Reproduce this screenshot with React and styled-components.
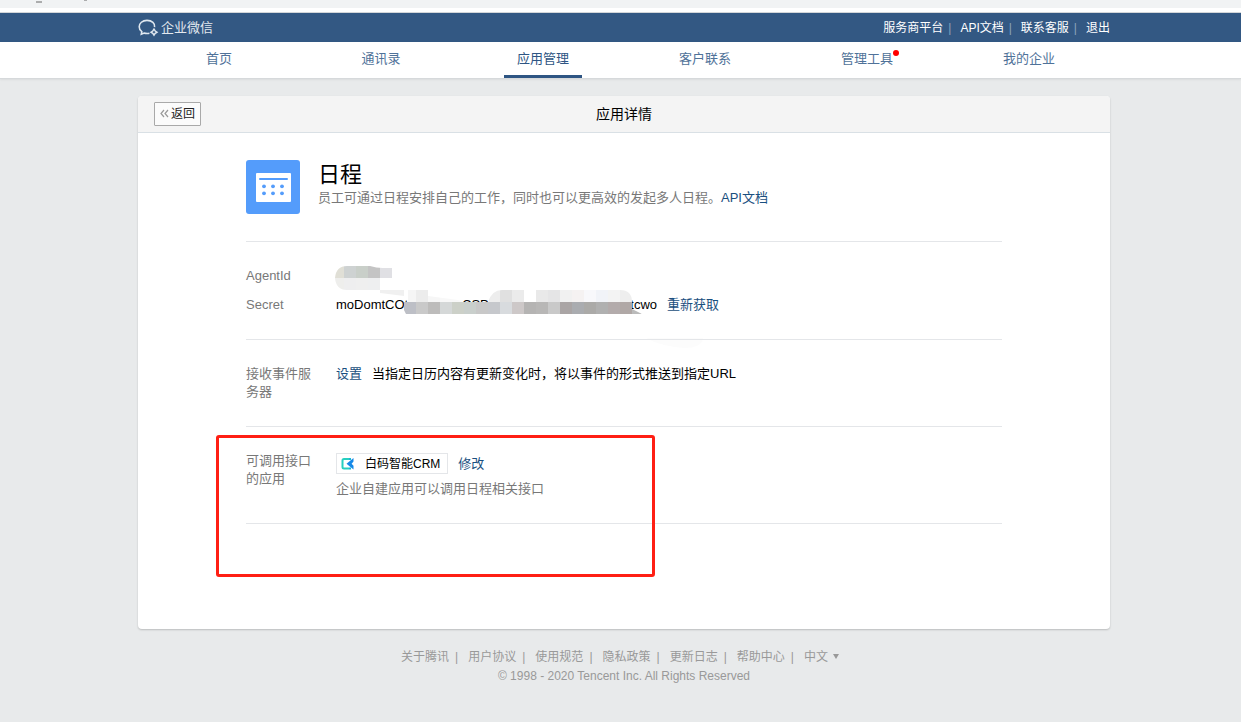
import React from 'react';
import styled, { createGlobalStyle } from 'styled-components';

const GlobalStyle = createGlobalStyle`
  * {
    box-sizing: border-box;
  }

  body {
    margin: 0;
    background: #e8eaeb;
    color: #000;
    font-family: "Liberation Sans", "Noto Sans CJK SC", sans-serif;
    font-size: 13px;
    line-height: 18px;
  }

  a {
    color: inherit;
    text-decoration: none;
  }
`;

const BrowserEdge = styled.div`
  height: 13px;
  background: #fff;
  border-top: 8px solid #f1f3f4;
  border-bottom: 1px solid #d3d6d9;
  position: relative;

  svg {
    display: block;
    position: absolute;
    top: -8px;
    left: 36px;
  }
`;

const Container = styled.div`
  max-width: 979px;
  margin: 0 auto;
  padding-left: 7px;
`;

const TopBar = styled.header`
  background: #335883;
  color: #fff;
`;

const TopBarInner = styled.div`
  display: flex;
  align-items: center;
  justify-content: space-between;
  height: 29px;
`;

const Logo = styled.a`
  display: flex;
  align-items: center;
  gap: 2px;
  color: #e3e9f0;
`;

const TopLinks = styled.div`
  display: flex;
  align-items: center;
  font-size: 12px;
`;

const TopDivider = styled.span`
  color: #8ea3bb;
  margin: 0 9px 0 5px;
`;

const NavBar = styled.nav`
  background: #fff;
  border-bottom: 1px solid #d6d9db;
  box-shadow: 0 1px 2px rgba(0, 0, 0, 0.06);
`;

const NavList = styled.div`
  display: grid;
  grid-template-columns: repeat(6, 1fr);
  justify-items: center;
`;

const NavItem = styled.a`
  position: relative;
  width: 78px;
  height: 36px;
  padding-top: 8px;
  text-align: center;
  color: ${(props) => (props.$active ? '#2e5583' : '#4f7299')};
  border-bottom: 3px solid ${(props) => (props.$active ? '#2e5583' : 'transparent')};
`;

const RedDot = styled.span`
  position: absolute;
  top: 8px;
  right: 7px;
  width: 6px;
  height: 6px;
  border-radius: 50%;
  background: #f00;
`;

const Card = styled.main`
  margin-top: 17px;
  padding-bottom: 105px;
  background: #fff;
  border-radius: 4px;
  box-shadow: 0 1px 2px rgba(0, 0, 0, 0.2);
`;

const CardHeader = styled.div`
  display: grid;
  grid-template-columns: 1fr auto 1fr;
  align-items: center;
  height: 37px;
  padding: 0 16px;
  background: #f4f4f4;
  border-bottom: 1px solid #d9e0e5;
  border-radius: 4px 4px 0 0;
`;

const BackButton = styled.button`
  display: flex;
  align-items: center;
  justify-self: start;
  gap: 2px;
  height: 24px;
  padding: 0 5px 3px;
  background: #fbfbfb;
  border: 1px solid #a9a9a9;
  border-radius: 1px;
  color: #222;
  font-family: inherit;
  font-size: 12px;
`;

const CardTitle = styled.h2`
  margin: 0;
  font-size: 14px;
  font-weight: 400;
`;

const CardBody = styled.div`
  padding: 0 108px;
`;

const AppInfo = styled.div`
  display: flex;
  gap: 18px;
  padding: 27px 0;

  svg {
    flex: none;
  }
`;

const AppName = styled.h1`
  margin: 0;
  font-size: 22px;
  font-weight: 400;
  line-height: 29px;
`;

const Muted = styled.p`
  margin: 0;
  color: #787878;
`;

const TextLink = styled.a`
  color: #1a4f80;
`;

const Section = styled.section`
  position: relative;
  display: flex;
  flex-direction: column;
  gap: 11px;
  padding: 25px 0;
  border-top: 1px solid #e4e6e9;

  &:last-child {
    border-bottom: 1px solid #e4e6e9;
  }
`;

const Row = styled.div`
  display: flex;
  gap: 22px;
`;

const Label = styled.div`
  width: 68px;
  flex: none;
  color: #787878;
`;

const Value = styled.div`
  position: relative;
  display: flex;
  align-items: center;
  align-self: flex-start;
  gap: 10px;
`;

const SecretText = styled.span`
  display: grid;
  grid-template-columns: 126px 1fr auto;
  width: 321px;
`;

const Smudge = styled.svg`
  position: absolute;
  top: ${(props) => props.$top};
  left: -2px;
  pointer-events: none;
`;

const Apps = styled.div`
  display: flex;
  flex-direction: column;
  gap: 6px;
  padding-top: 1px;
`;

const AppTag = styled.span`
  display: flex;
  align-items: center;
  gap: 11px;
  height: 21px;
  padding: 0 7px 0 4px;
  border: 1px solid #e4e6e9;
  font-size: 12px;
`;

const Highlight = styled.div`
  position: absolute;
  top: 8px;
  left: -30px;
  width: 439px;
  height: 142px;
  border: 3px solid #ff1f14;
  border-radius: 3px;
  pointer-events: none;
`;

const Footer = styled.footer`
  padding: 18px 0 36px;
  color: #999;
  font-size: 12px;
  text-align: center;
`;

const FooterLinks = styled.div`
  display: flex;
  align-items: center;
  justify-content: center;
  height: 20px;
  padding-right: 8px;
`;

const FooterDivider = styled.span`
  margin: 0 10px 0 6px;
`;

const LanguageSelect = styled.select`
  appearance: none;
  margin: 0;
  padding: 0;
  border: 0;
  background: none;
  color: inherit;
  font-family: inherit;
  font-size: 12px;
`;

const Copyright = styled.p`
  margin: 0;
`;

const NAV = ['首页', '通讯录', '应用管理', '客户联系', '管理工具', '我的企业'];
const TOP_LINKS = ['服务商平台', 'API文档', '联系客服', '退出'];
const FOOTER_LINKS = ['关于腾讯', '用户协议', '使用规范', '隐私政策', '更新日志', '帮助中心'];

const AGENT_TOP = ['#e0dfd6', '#ced2d2', '#c9cfc9', '#c4c4c4', '#e0e0e4'];
const AGENT_BOTTOM = ['#eeeeec', '#eeeeef', '#efefef', '#eeeff0', '#f3f3f3'];
const SECRET_TOP = [
  '#f5f5f5', '#ececec', '#f6f6f6', '#f8f8f8', '#f8f8f8', '#fafafa', '#fafafa', '#ededed', '#e0e0e0', '#ebebeb',
  '#fff', '#e9e9e9', '#e5e5e6', '#f1f1f1', '#f5f2f2', '#f8f8fb', '#f1f3f8', '#f3f3f3', '#eee',
];
const SECRET_BOTTOM = [
  '#bdbfc6', '#c9c9c9', '#bdbcbb', '#d5d8d8', '#ccd0c8', '#c9cfcc', '#c8c8c8', '#c6c8cc', '#d8dbde', '#cdc8c8',
  '#b5b4b3', '#b8b7b6', '#c9c9c9', '#aaa5a5', '#aaacb0', '#abaaa8', '#b0b0b0', '#b3abab', '#b0a8a6',
];

function LogoIcon() {
  return (
    <svg width="21" height="18" viewBox="0 0 21 18" fill="none" stroke="#dfe7ef" strokeWidth="1.6">
      <path d="M16.6 8.2C17.2 4.4 14 1.4 9 1.4C4.4 1.4 1.2 4.2 1.2 7.8C1.2 9.9 2.2 11.6 3.8 12.7L3.3 15.3L6.2 14.1C8.2 14.6 9.8 14.6 11.4 14.2" />
      <path d="M16 10.2L17.2 12L19 13.2L17.2 14.4L16 16.2L14.8 14.4L13 13.2L14.8 12Z" strokeWidth="1.5" />
    </svg>
  );
}

function CalendarIcon() {
  return (
    <svg width="54" height="54" viewBox="0 0 54 54">
      <rect width="54" height="54" rx="3" fill="#549cfb" />
      <rect x="10" y="13" width="35" height="29" rx="1" fill="#fff" />
      <rect x="13" y="18" width="29" height="2" rx="1" fill="#549cfb" />
      {[26, 33].map((y) =>
        [18, 27, 36].map((x) => <circle key={x + '-' + y} cx={x} cy={y + 0.3} r="1.9" fill="#549cfb" />)
      )}
    </svg>
  );
}

function CrmIcon() {
  return (
    <svg width="13" height="13" viewBox="0 0 13 13" fill="none" strokeWidth="2">
      <path d="M8 2H3Q1.5 2 1.5 3.5V10Q1.5 11.5 3 11.5H8" stroke="#27cfc0" />
      <path d="M8 2H10M8 11.5H10" stroke="#1bb5d4" />
      <path d="M12.5 1V4.6L10.6 6.7L12.5 8.8V12.5L5.5 6.7Z" fill="#1689e8" />
    </svg>
  );
}

function AgentSmudge() {
  return (
    <Smudge $top="-1px" width="60" height="26" aria-hidden="true">
      <clipPath id="agent">
        <path d="M1 12Q2 0 13 0H36Q42 2 49 2H58V12H46V24H13Q2 24 1 12Z" />
      </clipPath>
      <g clipPath="url(#agent)">
        {AGENT_TOP.map((c, i) => (
          <rect key={i} x={i * 12 - 2} y="0" width="12" height="12" fill={c} />
        ))}
        {AGENT_BOTTOM.map((c, i) => (
          <rect key={i} x={i * 12 - 2} y="12" width="12" height="12" fill={c} />
        ))}
      </g>
    </Smudge>
  );
}

function SecretSmudge() {
  return (
    <Smudge $top="-30px" width="390" height="90" aria-hidden="true">
      <path d="M46 24H70V30L46 27Z" fill="#f0f0f0" />
      <clipPath id="secret">
        <path d="M74 24H94V30L124 34L130 36H154Q158 24 168 24H286Q298 24 298 36L308 48H72Q68 42 70 36H74Z" />
      </clipPath>
      <g clipPath="url(#secret)">
        {SECRET_TOP.map((c, i) => (
          <rect key={i} x={70 + i * 12} y="24" width="12" height="12" fill={c} />
        ))}
        {SECRET_BOTTOM.map((c, i) => (
          <rect key={i} x={70 + i * 12} y="36" width="12" height="12" fill={c} />
        ))}
        <path d="M298 43L308 48H298Z" fill="#bbb" />
      </g>
      <path d="M312 72H369Q368 82 350 82Q326 80 312 72Z" fill="#fcfcfc" />
    </Smudge>
  );
}

function App() {
  return (
    <>
      <GlobalStyle />
      <BrowserEdge>
        <svg width="52" height="4" aria-hidden="true">
          <path d="M0 2H6M48 0H51" stroke="#666" />
        </svg>
      </BrowserEdge>

      <TopBar>
        <Container>
          <TopBarInner>
            <Logo href="#">
              <LogoIcon />
              企业微信
            </Logo>
            <TopLinks>
              {TOP_LINKS.map((text, i) => (
                <React.Fragment key={text}>
                  {i > 0 && <TopDivider>|</TopDivider>}
                  <a href="#">{text}</a>
                </React.Fragment>
              ))}
            </TopLinks>
          </TopBarInner>
        </Container>
      </TopBar>

      <NavBar>
        <Container>
          <NavList>
            {NAV.map((text) => (
              <NavItem key={text} href="#" $active={text === '应用管理'}>
                {text}
                {text === '管理工具' && <RedDot />}
              </NavItem>
            ))}
          </NavList>
        </Container>
      </NavBar>

      <Container>
        <Card>
          <CardHeader>
            <BackButton type="button">
              <svg width="9" height="11" viewBox="0 0 9 11" fill="none" stroke="#999" strokeWidth="1.2">
                <path d="M4 3L1 6.5L4 10M8 3L5 6.5L8 10" />
              </svg>
              返回
            </BackButton>
            <CardTitle>应用详情</CardTitle>
          </CardHeader>

          <CardBody>
            <AppInfo>
              <CalendarIcon />
              <div>
                <AppName>日程</AppName>
                <Muted>
                  员工可通过日程安排自己的工作，同时也可以更高效的发起多人日程。<TextLink href="#">API文档</TextLink>
                </Muted>
              </div>
            </AppInfo>

            <Section>
              <Row>
                <Label>AgentId</Label>
                <Value>
                  <AgentSmudge />
                </Value>
              </Row>
              <Row>
                <Label>Secret</Label>
                <Value>
                  <SecretText>
                    <span>moDomtCOt</span>
                    <span>CSPf</span>
                    <span>tcwo</span>
                  </SecretText>
                  <SecretSmudge />
                  <TextLink href="#">重新获取</TextLink>
                </Value>
              </Row>
            </Section>

            <Section>
              <Row>
                <Label>接收事件服务器</Label>
                <Value>
                  <TextLink href="#">设置</TextLink>
                  <span>当指定日历内容有更新变化时，将以事件的形式推送到指定URL</span>
                </Value>
              </Row>
            </Section>

            <Section>
              <Row>
                <Label>可调用接口的应用</Label>
                <Apps>
                  <Value>
                    <AppTag>
                      <CrmIcon />
                      白码智能CRM
                    </AppTag>
                    <TextLink href="#">修改</TextLink>
                  </Value>
                  <Muted>企业自建应用可以调用日程相关接口</Muted>
                </Apps>
              </Row>
              <Highlight />
            </Section>
          </CardBody>
        </Card>

        <Footer>
          <FooterLinks>
            {FOOTER_LINKS.map((text) => (
              <React.Fragment key={text}>
                <a href="#">{text}</a>
                <FooterDivider>|</FooterDivider>
              </React.Fragment>
            ))}
            <LanguageSelect aria-label="语言" defaultValue="zh">
              <option value="zh">中文</option>
            </LanguageSelect>
            <svg width="10" height="6" viewBox="0 0 10 6" aria-hidden="true">
              <path d="M4 0H10L7 5Z" fill="#999" />
            </svg>
          </FooterLinks>
          <Copyright>© 1998 - 2020 Tencent Inc. All Rights Reserved</Copyright>
        </Footer>
      </Container>
    </>
  );
}

export default App;
